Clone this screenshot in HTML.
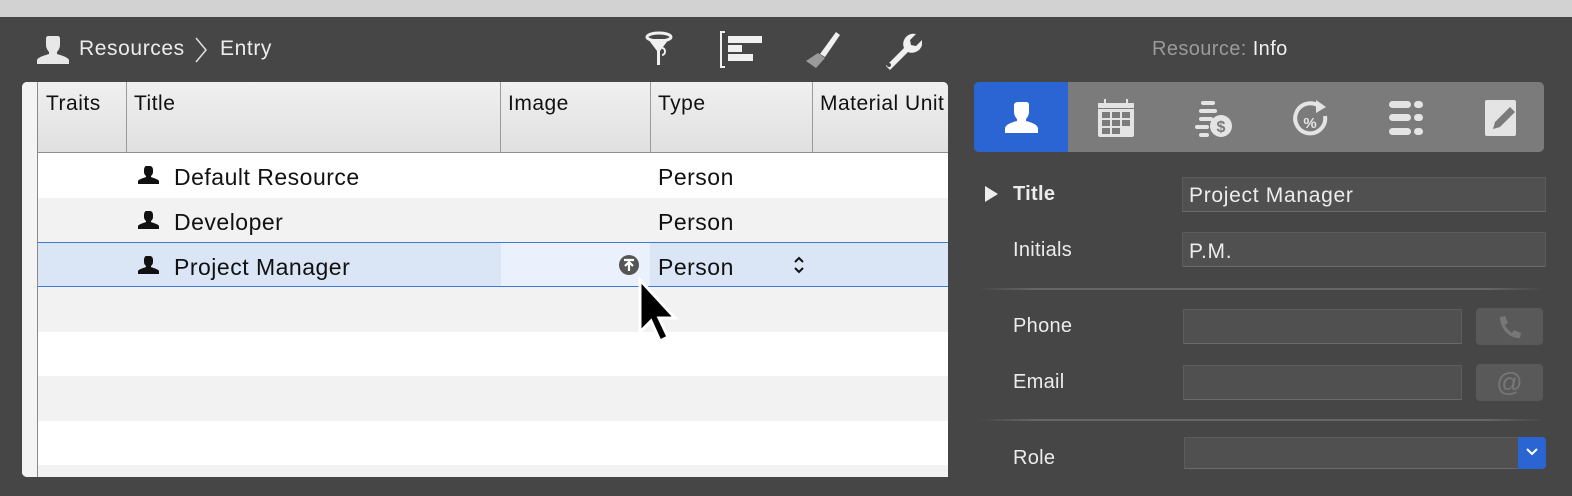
<!DOCTYPE html>
<html><head><meta charset="utf-8"><style>
*{box-sizing:border-box;margin:0;padding:0}
body{width:1572px;height:496px;background:#464646;position:relative;overflow:hidden;font-family:"Liberation Sans",sans-serif}
.a{position:absolute}
.t{color:#111;font-size:23px;letter-spacing:0.5px;white-space:nowrap}
.w{color:#ececec;font-size:20px;letter-spacing:0.3px;white-space:nowrap}
.in{position:absolute;background:#505050;border:1px solid #5c5c5c;border-bottom-color:#6a6a6a}
.row{position:absolute;left:38px;width:910px;height:45px}
.vl{position:absolute;top:82px;height:70px;width:1px;background:#9a9a9a}
</style></head><body>
<div class="a" style="left:0;top:0;width:1572px;height:17px;background:#d2d2d2"></div>
<svg class="a" style="left:36px;top:34px" width="34" height="30" viewBox="0 0 34 30"><path d="M12 2h10c1 0 2 1 2 3v6c0 3-2 6-3 7v2c3 1 11 3 12 6v4H1v-4c1-3 9-5 12-6v-2c-1-1-3-4-3-7V5c0-2 1-3 2-3z" fill="#e8e8e8"/></svg>
<div class="a w" style="left:79px;top:37px;font-size:21px;letter-spacing:0.6px">Resources</div>
<svg class="a" style="left:193px;top:36px" width="16" height="28"><path d="M3 2l10 12L3 26" stroke="#e0e0e0" stroke-width="1.5" fill="none"/></svg>
<div class="a w" style="left:220px;top:37px;font-size:21px;letter-spacing:0.6px">Entry</div>
<svg class="a" style="left:640px;top:30px" width="40" height="40"><ellipse cx="19" cy="7" rx="12" ry="4" fill="none" stroke="#f0f0f0" stroke-width="3"/><path d="M8 9l9 12v14h3V21l9-12" fill="#f0f0f0"/><path d="M22 18c4 0 4 7 0 7" stroke="#f0f0f0" stroke-width="2" fill="none"/></svg>
<svg class="a" style="left:720px;top:31px" width="44" height="38"><path d="M3 1H1v35h2M3 1h2M3 36h2" stroke="#f0f0f0" stroke-width="2" fill="none"/><rect x="8" y="5" width="34" height="7" fill="#f0f0f0"/><rect x="8" y="14" width="14" height="7" fill="#f0f0f0"/><rect x="8" y="23" width="25" height="7" fill="#f0f0f0"/></svg>
<svg class="a" style="left:800px;top:30px" width="42" height="40"><path d="M36 2l4 3-15 22-5-3z" fill="#f0f0f0"/><path d="M18 23l7 5-9 10-10-7z" fill="#9a9a9a"/></svg>
<svg class="a" style="left:880px;top:30px" width="42" height="40"><path d="M6 36l18-18c-3-7 3-16 12-14l-6 6 1 5 5 1 6-6c2 9-7 15-14 12L10 40z" fill="#f0f0f0"/><circle cx="9" cy="35" r="2" fill="#464646"/></svg>
<div class="a" style="left:1152px;top:38px;font-size:20px;letter-spacing:0.4px;color:#9a9a9a">Resource: <span style="color:#f0f0f0">Info</span></div>
<div class="a" style="left:22px;top:82px;width:926px;height:395px;background:#fff;border-radius:5px;overflow:hidden">
 <div class="a" style="left:0;top:0;width:16px;height:395px;background:#f4f4f4;border-right:1px solid #8a8a8a"></div>
 <div class="a" style="left:16px;top:0;width:910px;height:71px;background:linear-gradient(#f0f0f0,#e0e0e0);border-bottom:1px solid #8e8e8e"></div>
</div>
<div class="vl" style="left:126px"></div><div class="vl" style="left:500px"></div><div class="vl" style="left:650px"></div><div class="vl" style="left:812px"></div>
<div class="a t" style="left:46px;top:92px;font-size:21px">Traits</div>
<div class="a t" style="left:134px;top:92px;font-size:21px">Title</div>
<div class="a t" style="left:508px;top:92px;font-size:21px">Image</div>
<div class="a t" style="left:658px;top:92px;font-size:21px">Type</div>
<div class="a t" style="left:820px;top:92px;font-size:21px;width:128px;overflow:hidden">Material Unit</div>
<div class="row" style="top:198px;background:#f2f2f2"></div>
<div class="row" style="top:242px;background:#dae5f5;border-top:1px solid #3c7ad6;border-bottom:1px solid #3c7ad6"></div>
<div class="a" style="left:501px;top:243px;width:149px;height:43px;background:#eaf1fc"></div>
<div class="row" style="top:287px;background:#f2f2f2"></div>
<div class="row" style="top:376px;background:#f2f2f2"></div>
<div class="row" style="top:465px;height:12px;background:#f2f2f2"></div>
<svg width="0" height="0" style="position:absolute"><defs><path id="p" d="M8 1h4c2 0 3 2 3 4v2c0 2-1 3-2 4v1c2 1 7 2 8 4v3H0v-3c1-2 6-3 8-4v-1C7 10 6 9 6 7V5c0-2 1-4 2-4z"/></defs></svg>
<svg class="a" style="left:138px;top:165px" width="22" height="20"><use href="#p" fill="#111"/></svg>
<svg class="a" style="left:138px;top:210px" width="22" height="20"><use href="#p" fill="#111"/></svg>
<svg class="a" style="left:138px;top:255px" width="22" height="20"><use href="#p" fill="#111"/></svg>
<div class="a t" style="left:174px;top:164px">Default Resource</div>
<div class="a t" style="left:174px;top:209px">Developer</div>
<div class="a t" style="left:174px;top:254px">Project Manager</div>
<div class="a t" style="left:658px;top:164px">Person</div>
<div class="a t" style="left:658px;top:209px">Person</div>
<div class="a t" style="left:658px;top:254px">Person</div>
<svg class="a" style="left:792px;top:255px" width="14" height="20"><path d="M3 7l4-4 4 4M3 13l4 4 4-4" stroke="#111" stroke-width="2" fill="none"/></svg>
<svg class="a" style="left:618px;top:254px" width="24" height="24"><circle cx="11" cy="11" r="10" fill="#555"/><path d="M6 6h10M11 17V9M7 12l4-4 4 4" stroke="#fff" stroke-width="2.2" fill="none"/></svg>
<svg class="a" style="left:632px;top:276px" width="50" height="72"><path d="M8 4v52l11-11 9 20 8-4-9-19h16z" fill="#000" stroke="#fff" stroke-width="3"/></svg>
<div class="a" style="left:974px;top:82px;width:570px;height:70px;background:#7b7b7b;border-radius:5px;overflow:hidden"><div class="a" style="left:0;top:0;width:94px;height:70px;background:#2a65d3"></div></div>
<svg class="a" style="left:1004px;top:100px" width="36" height="36"><path d="M14 2h8c2 0 3 1 3 3v7c0 3-2 6-3 7v2c4 1 11 3 12 7v5H1v-5c1-4 8-6 12-7v-2c-1-1-3-4-3-7V5c0-2 2-3 4-3z" fill="#fff"/></svg>
<svg class="a" style="left:1096px;top:98px" width="40" height="40"><rect x="2" y="5" width="36" height="34" rx="2" fill="#e4e4e4"/><g fill="#7b7b7b"><rect x="2" y="3" width="36" height="8"/><rect x="6" y="14" width="8" height="6"/><rect x="16" y="14" width="8" height="6"/><rect x="26" y="14" width="8" height="6"/><rect x="6" y="22" width="8" height="6"/><rect x="16" y="22" width="8" height="6"/><rect x="26" y="22" width="8" height="6"/><rect x="6" y="30" width="8" height="6"/><rect x="16" y="30" width="8" height="6"/></g><rect x="2" y="5" width="36" height="5" fill="#e4e4e4"/><rect x="8" y="1" width="2" height="6" fill="#e4e4e4"/><rect x="30" y="1" width="2" height="6" fill="#e4e4e4"/></svg>
<svg class="a" style="left:1193px;top:100px" width="44" height="38"><g fill="#e4e4e4"><rect x="8" y="1" width="14" height="4" rx="2"/><rect x="6" y="9" width="18" height="4" rx="2"/><rect x="6" y="17" width="14" height="4" rx="2"/><rect x="2" y="25" width="14" height="4" rx="2"/><rect x="6" y="33" width="10" height="4" rx="2"/><circle cx="28" cy="26" r="11"/></g><text x="28" y="32" font-size="16" font-weight="bold" text-anchor="middle" fill="#7b7b7b" font-family="Liberation Sans">$</text></svg>
<svg class="a" style="left:1290px;top:98px" width="44" height="44"><path d="M30 9A15 15 0 1 0 35 18" stroke="#e4e4e4" stroke-width="4" fill="none"/><path d="M26 2l10 7-10 6z" fill="#e4e4e4"/><text x="20" y="30" font-size="15" font-weight="bold" text-anchor="middle" fill="#e4e4e4" font-family="Liberation Sans">%</text></svg>
<svg class="a" style="left:1388px;top:100px" width="36" height="36"><g fill="#e4e4e4"><rect x="1" y="1" width="22" height="7" rx="3.5"/><rect x="26" y="1" width="9" height="7" rx="3.5"/><rect x="1" y="14" width="22" height="7" rx="3.5"/><rect x="26" y="14" width="9" height="7" rx="3.5"/><rect x="1" y="28" width="22" height="7" rx="3.5"/><rect x="26" y="28" width="9" height="7" rx="3.5"/></g></svg>
<svg class="a" style="left:1485px;top:100px" width="36" height="36"><rect x="0" y="0" width="31" height="36" rx="2" fill="#e4e4e4"/><path d="M8 29l2-7 15-15 5 5-15 15z" fill="#7b7b7b"/></svg>
<svg class="a" style="left:983px;top:185px" width="16" height="18"><path d="M2 1l13 8-13 8z" fill="#eee"/></svg>
<div class="a w" style="left:1013px;top:183px;font-weight:bold">Title</div>
<div class="in" style="left:1182px;top:177px;width:364px;height:35px"></div>
<div class="a w" style="left:1189px;top:184px;font-size:21px;letter-spacing:0.7px">Project Manager</div>
<div class="a w" style="left:1013px;top:239px">Initials</div>
<div class="in" style="left:1182px;top:232px;width:364px;height:35px"></div>
<div class="a w" style="left:1189px;top:240px;font-size:21px;letter-spacing:0.7px">P.M.</div>
<div class="a" style="left:978px;top:288px;width:566px;height:2px;background:linear-gradient(90deg,#464646,#666 10%,#666 90%,#464646)"></div>
<div class="a w" style="left:1013px;top:315px">Phone</div>
<div class="in" style="left:1183px;top:309px;width:279px;height:35px"></div>
<div class="a" style="left:1476px;top:308px;width:67px;height:37px;background:#595959;border-radius:4px"></div>
<svg class="a" style="left:1496px;top:314px" width="26" height="26"><path d="M4 3l5-1 3 7-3 2c2 4 4 6 7 8l2-3 7 3-1 5c-10 1-20-9-20-21z" fill="#777"/></svg>
<div class="a" style="left:1476px;top:364px;width:67px;height:37px;background:#595959;border-radius:4px;color:#777;font-size:26px;text-align:center;line-height:37px">@</div>
<div class="a w" style="left:1013px;top:371px">Email</div>
<div class="in" style="left:1183px;top:365px;width:279px;height:35px"></div>
<div class="a" style="left:978px;top:419px;width:566px;height:2px;background:linear-gradient(90deg,#464646,#666 10%,#666 90%,#464646)"></div>
<div class="a w" style="left:1013px;top:447px">Role</div>
<div class="in" style="left:1184px;top:437px;width:336px;height:32px"></div>
<div class="a" style="left:1518px;top:437px;width:28px;height:32px;background:#2a65d3;border-radius:0 4px 4px 0"></div>
<svg class="a" style="left:1524px;top:446px" width="16" height="12"><path d="M3 3l5 5 5-5" stroke="#fff" stroke-width="2" fill="none"/></svg>
</body></html>
